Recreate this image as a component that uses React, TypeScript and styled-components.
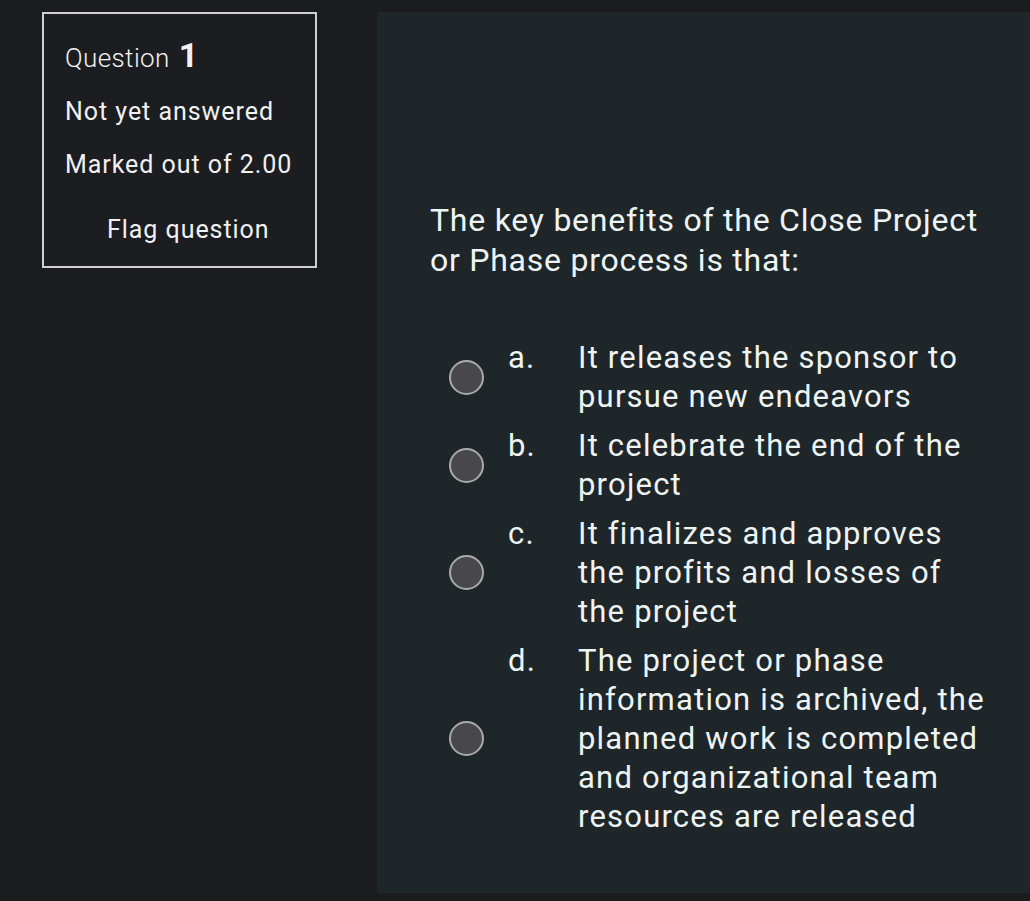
import React from 'react';
import styled, { createGlobalStyle } from 'styled-components';

const GlobalStyle = createGlobalStyle`
  html, body {
    margin: 0;
    padding: 0;
    background: #1b1c1e;
  }
  body {
    font-family: Roboto, "Liberation Sans", Arial, sans-serif;
    -webkit-font-smoothing: antialiased;
  }
`;

const SPage = styled.div`
  display: flex;
  align-items: flex-start;
  gap: 60px;
  padding: 12px 0 8px 42px;
  min-height: 901px;
  box-sizing: border-box;
  overflow: hidden;
`;

const SInfo = styled.div`
  flex: 0 0 auto;
  width: 275px;
  height: 256px;
  box-sizing: border-box;
  border: 2px solid #cfcfcf;
  background: #1c1d20;
  padding: 21px 0 0 21px;
  display: flex;
  flex-direction: column;
  color: #f1f1f1;
  letter-spacing: 0.95px;
`;

const SQno = styled.h3`
  margin: 0;
  font-size: 26px;
  font-weight: 300;
  line-height: 40px;
  letter-spacing: 0.4px;

  b {
    font-size: 34px;
    font-weight: 700;
    margin-left: 9px;
  }
`;

const SState = styled.div<{ $gap: number }>`
  margin-top: ${({ $gap }) => $gap}px;
  font-size: 25px;
  line-height: 34px;
`;

const SFlag = styled.a`
  margin-top: 31px;
  padding-left: 42px;
  font-size: 25px;
  line-height: 34px;
  color: #f1f1f1;
`;

const SPanel = styled.div`
  flex: 1 1 auto;
  height: 881px;
  background: #1f2629;
  padding: 188px 0 0 53px;
  box-sizing: border-box;
  color: #eef4f3;
`;

const SQText = styled.div`
  width: 560px;
  font-size: 32px;
  line-height: 40px;
  letter-spacing: 0.75px;
`;

const SAnswers = styled.div`
  margin-top: 58px;
  padding-left: 18px;
  display: flex;
  flex-direction: column;
  gap: 10px;
`;

const SOption = styled.label`
  display: grid;
  grid-template-columns: 35px 45px 410px;
  column-gap: 25px;
  align-items: center;
  font-size: 31px;
  line-height: 39px;
  letter-spacing: 1.2px;
`;

const SRadio = styled.span`
  width: 35px;
  height: 35px;
  margin-left: 1px;
  box-sizing: border-box;
  border-radius: 50%;
  border: 2.5px solid #a9abab;
  background: #48484a;
`;

const SLetter = styled.span`
  align-self: start;
`;

const SAnswerText = styled.span``;

const options = [
  { letter: 'a.', text: 'It releases the sponsor to pursue new endeavors' },
  { letter: 'b.', text: 'It celebrate the end of the project' },
  { letter: 'c.', text: 'It finalizes and approves the profits and losses of the project' },
  {
    letter: 'd.',
    text: 'The project or phase information is archived, the planned work is completed and organizational team resources are released',
  },
];

const App = () => {
  return (
    <>
      <GlobalStyle />
      <SPage>
        {/* question info */}
        <SInfo>
          <SQno>
            Question<b>1</b>
          </SQno>
          <SState $gap={17}>Not yet answered</SState>
          <SState $gap={19}>Marked out of 2.00</SState>
          <SFlag>Flag question</SFlag>
        </SInfo>

        {/* question content */}
        <SPanel>
          <SQText>The key benefits of the Close Project or Phase process is that:</SQText>
          <SAnswers>
            {options.map((o) => (
              <SOption key={o.letter}>
                <SRadio />
                <SLetter>{o.letter}</SLetter>
                <SAnswerText>{o.text}</SAnswerText>
              </SOption>
            ))}
          </SAnswers>
        </SPanel>
      </SPage>
    </>
  );
};

export default App;
